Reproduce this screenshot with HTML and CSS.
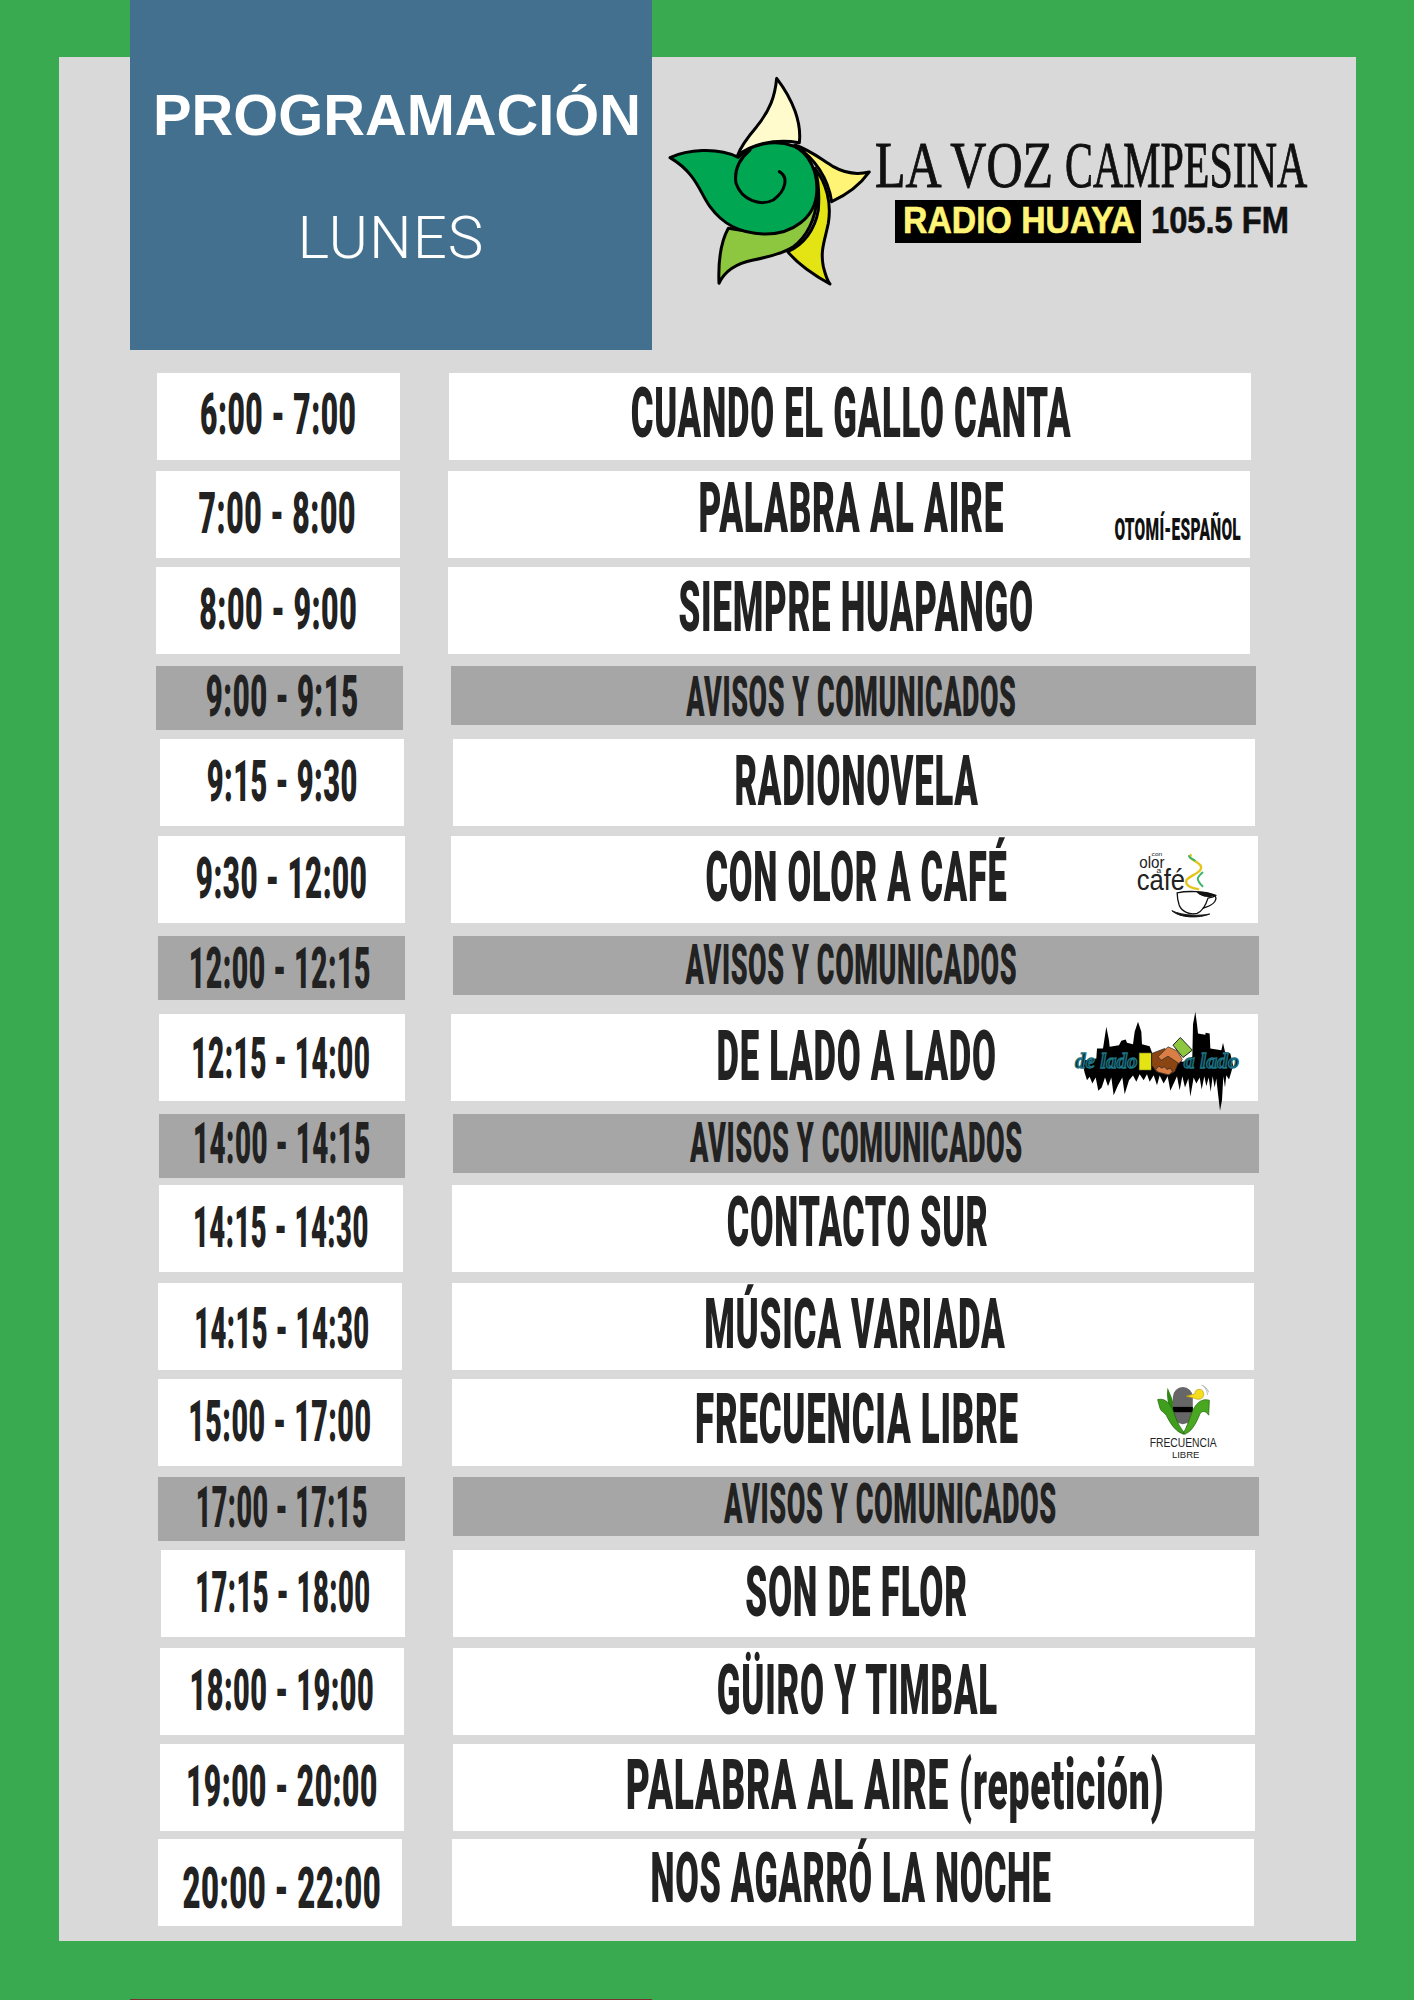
FILE: index.html
```html
<!DOCTYPE html>
<html lang="es">
<head>
<meta charset="utf-8">
<title>Programación Lunes - La Voz Campesina</title>
<link rel="stylesheet" href="styles.css">
</head>
<body>
<main class="board">
  <header class="head">
    <div class="banner">
      <h1 class="banner-title">PROGRAMACIÓN</h1>
      <p class="banner-day">LUNES</p>
    </div>
    <svg class="logo" viewBox="660 70 660 230" width="660" height="230" role="img" aria-label="La Voz Campesina">
      <g transform="translate(660 70) scale(0.3333)" stroke="#000" stroke-width="9" stroke-linejoin="round" stroke-linecap="round">
        <path fill="#fffbcc" d="M350 25C345 80 330 120 290 170C260 205 240 235 232 258C270 225 340 205 418 218C425 160 400 90 350 25Z"/>
        <path fill="#fff475" d="M405 225C450 240 480 265 520 290C555 310 590 315 628 306C600 345 560 375 515 395C505 330 470 270 405 225Z"/>
        <path fill="#e4e414" d="M465 295C500 340 515 400 505 460C495 510 480 540 490 590C495 610 500 630 510 642C470 620 420 590 383 545C430 525 465 480 475 420C478 380 478 340 465 295Z"/>
        <path fill="#8dc63f" d="M205 475C180 520 175 590 177 640C195 600 230 580 280 570C330 560 370 550 400 530C440 500 465 450 472 385L300 490Z"/>
        <path fill="#00a651" d="M30 263C80 240 170 230 235 262C270 225 340 205 400 228C450 250 475 310 470 370C465 440 400 495 310 492C240 490 190 465 150 410C120 370 110 310 30 263Z"/>
        <path fill="none" d="M358 305C385 320 380 360 340 390C300 410 245 390 228 340C222 300 240 265 270 240"/>
      </g>
      <g class="logo-name">
        <text transform="translate(875 187) scale(.768 1)">LA VOZ</text>
        <text transform="translate(1065 187) scale(.645 1)">CAMPESINA</text>
      </g>
      <rect x="895" y="200" width="246" height="43" fill="#000"/>
      <text class="logo-radio" x="903" y="233" textLength="232" lengthAdjust="spacingAndGlyphs">RADIO HUAYA</text>
      <text class="logo-fm" x="1151" y="233" textLength="138" lengthAdjust="spacingAndGlyphs">105.5 FM</text>
    </svg>
  </header>

  <section class="grid">
    <div class="row r1"><div class="time"><span class="txt">6:00 - 7:00</span></div><div class="show"><span class="txt">CUANDO EL GALLO CANTA</span></div></div>
    <div class="row r2"><div class="time"><span class="txt">7:00 - 8:00</span></div><div class="show"><span class="txt">PALABRA AL AIRE</span><span class="lang">OTOMÍ-ESPAÑOL</span></div></div>
    <div class="row r3"><div class="time"><span class="txt">8:00 - 9:00</span></div><div class="show"><span class="txt">SIEMPRE HUAPANGO</span></div></div>
    <div class="row notice r4"><div class="time"><span class="txt">9:00 - 9:15</span></div><div class="show"><span class="txt">AVISOS Y COMUNICADOS</span></div></div>
    <div class="row r5"><div class="time"><span class="txt">9:15 - 9:30</span></div><div class="show"><span class="txt">RADIONOVELA</span></div></div>
    <div class="row r6"><div class="time"><span class="txt">9:30 - 12:00</span></div><div class="show"><span class="txt">CON OLOR A CAFÉ</span>
      <svg class="badge badge-cafe" viewBox="280 1130 260 220" width="87" height="73" role="img" aria-label="Con olor a café">
        <g class="cafe-words">
          <text x="335" y="1156" font-size="18" textLength="32" lengthAdjust="spacingAndGlyphs">con</text>
          <text x="298" y="1192" font-size="50" textLength="76" lengthAdjust="spacingAndGlyphs">olor</text>
          <text x="350" y="1208" font-size="20" textLength="14" lengthAdjust="spacingAndGlyphs">a</text>
          <text x="290" y="1261" font-size="88" textLength="146" lengthAdjust="spacingAndGlyphs">café</text>
        </g>
        <path d="M455 1152C440 1165 470 1170 482 1185C495 1205 450 1215 440 1230C435 1245 450 1252 478 1258" fill="none" stroke="#e3c51b" stroke-width="7"/>
        <path d="M448 1155C445 1165 462 1165 466 1172M490 1205C470 1222 468 1228 490 1250" fill="none" stroke="#3cb56a" stroke-width="6"/>
        <path d="M412 1268C440 1262 500 1262 528 1276C522 1281 515 1282 505 1284C500 1300 490 1322 472 1330C450 1335 425 1325 418 1305C414 1292 412 1280 412 1268Z" fill="#fff" stroke="#111" stroke-width="4"/>
        <path d="M470 1266C490 1263 510 1268 526 1276C505 1285 485 1280 470 1266Z" fill="#111"/>
        <path d="M505 1278C522 1268 535 1280 525 1295C516 1308 500 1310 488 1316" fill="none" stroke="#111" stroke-width="4"/>
        <path d="M396 1322C420 1345 480 1345 510 1332C480 1338 430 1338 396 1322Z" fill="#111" stroke="#111" stroke-width="3"/>
      </svg>
    </div></div>
    <div class="row notice r7"><div class="time"><span class="txt">12:00 - 12:15</span></div><div class="show"><span class="txt">AVISOS Y COMUNICADOS</span></div></div>
    <div class="row r8"><div class="time"><span class="txt">12:15 - 14:00</span></div><div class="show"><span class="txt">DE LADO A LADO</span>
      <svg class="badge badge-lado" viewBox="100 30 510 305" width="170" height="102" role="img" aria-label="De lado a lado">
        <path fill="#000" d="M132 205L135 180L170 175L172 145L190 145L200 80L208 120L210 140L238 135L245 122L258 118L262 128L280 132L285 95L295 65L305 95L307 132L330 138L340 165L430 185L458 170L460 72L467 35L472 72L475 100L497 104L498 98L510 100L512 145L545 150L550 128L556 155L572 160L580 195L575 215L568 238L560 225L556 262L551 228L547 300L541 332L535 280L530 235L525 262L519 228L513 275L507 232L500 258L494 228L486 268L480 232L470 250L462 232L452 290L446 235L436 262L428 228L420 270L412 228L402 250L392 272L384 228L372 250L360 226L352 255L342 225L330 245L322 222L312 240L300 222L290 245L280 226L268 240L255 282L248 232L235 255L222 285L215 232L205 258L196 232L186 262L176 272L168 232L158 250L150 230L142 240L135 218Z"/>
        <g class="lado-words">
          <text x="106" y="205" font-size="66" textLength="188" lengthAdjust="spacingAndGlyphs">de lado</text>
          <text x="432" y="205" font-size="66" textLength="166" lengthAdjust="spacingAndGlyphs">a lado</text>
        </g>
        <rect x="298" y="158" width="37" height="52" fill="#e4e414" stroke="#222" stroke-width="2"/>
        <path d="M422 112L458 150L430 172L400 135Z" fill="#8dc63f" stroke="#222" stroke-width="3"/>
        <path d="M336 160L375 145L420 180L405 215L385 225L350 215L336 195Z" fill="#8b4513" stroke="#222" stroke-width="2"/>
        <path d="M355 170L385 140L412 152L428 178L418 190L385 168L365 180Z" fill="#d97f45" stroke="#222" stroke-width="2"/>
        <path d="M348 208L358 198L366 204L374 200L382 208L392 204L398 214L388 224L372 220L356 216Z" fill="#d97f45" stroke="#222" stroke-width="2"/>
      </svg>
    </div></div>
    <div class="row notice r9"><div class="time"><span class="txt">14:00 - 14:15</span></div><div class="show"><span class="txt">AVISOS Y COMUNICADOS</span></div></div>
    <div class="row r10"><div class="time"><span class="txt">14:15 - 14:30</span></div><div class="show"><span class="txt">CONTACTO SUR</span></div></div>
    <div class="row r11"><div class="time"><span class="txt">14:15 - 14:30</span></div><div class="show"><span class="txt">MÚSICA VARIADA</span></div></div>
    <div class="row r12"><div class="time"><span class="txt">15:00 - 17:00</span></div><div class="show"><span class="txt">FRECUENCIA LIBRE</span>
      <svg class="badge badge-libre" viewBox="80 65 220 235" width="73" height="78" role="img" aria-label="Frecuencia Libre">
        <path d="M142 82C150 100 160 120 165 150L150 150C142 125 138 105 142 82Z" fill="#2f8a14"/>
        <rect x="158" y="80" width="60" height="112" rx="30" fill="#666"/>
        <rect x="158" y="140" width="60" height="16" fill="#000"/>
        <path d="M112 118C135 112 152 130 162 160C172 190 182 205 196 222C170 222 150 190 138 165C125 150 122 155 118 140Z" fill="#3f9f1c" stroke="#1c5c0a" stroke-width="2"/>
        <path d="M268 120C245 112 225 130 214 160C205 185 198 205 188 222C212 222 228 190 240 160C252 145 262 160 266 165Z" fill="#4aa820" stroke="#1c5c0a" stroke-width="2"/>
        <path d="M198 108L225 100C222 88 240 82 248 92C255 102 250 118 234 117C224 116 220 112 198 108Z" fill="#f5dc1e" stroke="#b8a010" stroke-width="2"/>
        <path d="M250 78C258 84 262 92 262 104M244 74C254 78 262 84 266 96" fill="none" stroke="#999" stroke-width="2"/>
        <g class="libre-words">
          <text x="88" y="260" font-size="38" textLength="202" lengthAdjust="spacingAndGlyphs">FRECUENCIA</text>
          <text x="155" y="294" font-size="30" textLength="83" lengthAdjust="spacingAndGlyphs">LIBRE</text>
        </g>
      </svg>
    </div></div>
    <div class="row notice r13"><div class="time"><span class="txt">17:00 - 17:15</span></div><div class="show"><span class="txt">AVISOS Y COMUNICADOS</span></div></div>
    <div class="row r14"><div class="time"><span class="txt">17:15 - 18:00</span></div><div class="show"><span class="txt">SON DE FLOR</span></div></div>
    <div class="row r15"><div class="time"><span class="txt">18:00 - 19:00</span></div><div class="show"><span class="txt">GÜIRO Y TIMBAL</span></div></div>
    <div class="row r16"><div class="time"><span class="txt">19:00 - 20:00</span></div><div class="show"><span class="txt">PALABRA AL AIRE (repetición)</span></div></div>
    <div class="row r17"><div class="time"><span class="txt">20:00 - 22:00</span></div><div class="show"><span class="txt">NOS AGARRÓ LA NOCHE</span></div></div>
  </section>
</main>
<div class="edge"></div>
</body>
</html>
```

FILE: styles.css
```css
html, body { margin: 0; padding: 0; }
body { width: 1414px; height: 2000px; background: #39aa4f; overflow: hidden; }

.board {
  display: flex;
  flex-direction: column;
  margin: 57px 58px 0 59px;
  height: 1884px;
  background: #d9d9d9;
}
.head { display: flex; margin-top: -57px; margin-left: 71px; height: 350px; flex: none; }
.banner { width: 522px; height: 350px; flex: none; background: #43708f; color: #fff; padding-top: 87px; box-sizing: border-box; }
.banner-title {
  margin: 0 0 0 23px;
  font: 700 57.8px/1 "Liberation Sans", Arial, sans-serif;
  white-space: nowrap;
}
.banner-day {
  margin: 63px 0 0;
  font: 300 60px/1 Roboto, "Liberation Sans", sans-serif;
  letter-spacing: 1px;
  text-align: center;
}
.logo { display: block; margin: 70px 0 0 8px; flex: none; overflow: visible; }
.logo-name text { font: 400 65px "Liberation Serif", serif; fill: #111; stroke: #111; stroke-width: 1px; }
.logo-radio { font: 700 36px "Liberation Sans", sans-serif; fill: #fff475; stroke: #fff475; stroke-width: .6px; }
.logo-fm { font: 700 36px "Liberation Sans", sans-serif; fill: #111; stroke: #111; stroke-width: .6px; }

.grid { display: flex; flex-direction: column; }
.row {
  display: flex;
  align-items: flex-start;
  flex: none;
  margin-top: var(--mt);
  margin-left: var(--x);
}
.time, .show {
  display: flex;
  align-items: center;
  justify-content: center;
  background: #fff;
  height: 87px;
  flex: none;
}
.time { width: var(--tw); }
.show { width: var(--mw); margin-left: var(--gap); position: relative; }
.notice .time { height: 64px; background: #a6a6a6; }
.notice .show { height: 59px; background: #a6a6a6; }

.txt {
  display: inline-block;
  flex: none;
  white-space: nowrap;
  color: #222;
  font-family: Roboto, "Liberation Sans", sans-serif;
  font-weight: 900;
  line-height: 1;
}
.time .txt {
  font-size: 58px;
  letter-spacing: 1px;
  transform: translate(var(--tdx, 0px), var(--tdy, 0px)) scaleX(var(--tsx, .5));
}
.show .txt {
  font-size: 70px;
  letter-spacing: 1.5px;
  transform: translate(var(--mdx, 0px), var(--mdy, 0px)) scaleX(var(--msx, .5));
}
.notice .show .txt { font-size: 55px; letter-spacing: 1.2px; }

.lang {
  position: absolute;
  right: 9px;
  bottom: 13px;
  font: 900 31px/1 Roboto, sans-serif;
  letter-spacing: .5px;
  color: #111;
  white-space: nowrap;
  transform: scaleX(.5);
  transform-origin: right center;
}
.badge { position: absolute; display: block; overflow: visible; }
.badge-cafe { left: 682px; top: 11px; }
.badge-lado { left: 622px; top: -4px; }
.badge-libre { left: 695px; top: 3px; }
.cafe-words text { font-family: "Liberation Sans", sans-serif; fill: #222; }
.lado-words text { font-family: "Liberation Serif", serif; font-style: italic; font-weight: 700; fill: #0b2930; stroke: #1d7383; stroke-width: 4px; }
.libre-words text { font-family: "Liberation Sans", sans-serif; fill: #222; }

.edge { width: 522px; height: 1px; margin: 58px 0 0 130px; background: #7d2e2e; }

.r1  { --mt: 23px; --x: 98px;  --tw: 243px; --gap: 49px; --mw: 802px; --tdy: -3px; --tsx: .517; --mdx: 1px; --mdy: -4px; --msx: .495; }
.r2  { --mt: 11px; --x: 97px;  --tw: 244px; --gap: 48px; --mw: 802px; --tdx: -1px; --tdy: -2px; --tsx: .52; --mdx: 2px; --mdy: -7px; --msx: .502; }
.r3  { --mt: 9px;  --x: 97px;  --tw: 244px; --gap: 48px; --mw: 802px; --tdy: -2px; --tsx: .522; --mdx: 7px; --mdy: -4px; --msx: .499; }
.r4  { --mt: 12px; --x: 97px;  --tw: 247px; --gap: 48px; --mw: 805px; --tdx: 3px; --tdy: -2px; --tsx: .505; --mdx: -2px; --mdy: 2px; --msx: .488; }
.r5  { --mt: 9px;  --x: 101px; --tw: 244px; --gap: 49px; --mw: 802px; --tdy: -2px; --tsx: .5; --mdx: 3px; --mdy: -2px; --msx: .495; }
.r6  { --mt: 10px; --x: 99px;  --tw: 247px; --gap: 46px; --mw: 807px; --tdy: -2px; --tsx: .509; --mdx: 2px; --mdy: -3px; --msx: .491; }
.r7  { --mt: 13px; --x: 99px;  --tw: 247px; --gap: 48px; --mw: 806px; --tdx: -2px; --tsx: .49; --mdx: -5px; --msx: .49; }
.r8  { --mt: 14px; --x: 100px; --tw: 246px; --gap: 46px; --mw: 807px; --tdx: -1px; --tsx: .482; --mdx: 2px; --mdy: -2px; --msx: .496; }
.r9  { --mt: 13px; --x: 100px; --tw: 246px; --gap: 48px; --mw: 806px; --tdy: -3px; --tsx: .478; --msx: .492; }
.r10 { --mt: 7px;  --x: 100px; --tw: 244px; --gap: 49px; --mw: 802px; --tdy: -2px; --tsx: .473; --mdx: 5px; --mdy: -7px; --msx: .487; }
.r11 { --mt: 11px; --x: 99px;  --tw: 244px; --gap: 50px; --mw: 802px; --tdx: 2px; --tdy: 1px; --tsx: .472; --mdx: 2px; --mdy: -3px; --msx: .499; }
.r12 { --mt: 9px;  --x: 99px;  --tw: 244px; --gap: 50px; --mw: 802px; --tdy: -2px; --tsx: .493; --mdx: 4px; --mdy: -4px; --msx: .498; }
.r13 { --mt: 11px; --x: 99px;  --tw: 247px; --gap: 48px; --mw: 806px; --tdy: -2px; --tsx: .463; --mdx: 34px; --mdy: -2px; --msx: .492; }
.r14 { --mt: 9px;  --x: 102px; --tw: 244px; --gap: 48px; --mw: 802px; --tdy: -2px; --tsx: .472; --mdx: 3px; --mdy: -2px; --msx: .5; }
.r15 { --mt: 11px; --x: 101px; --tw: 244px; --gap: 49px; --mw: 802px; --tdy: -2px; --tsx: .497; --mdx: 3px; --mdy: -2px; --msx: .498; }
.r16 { --mt: 9px;  --x: 101px; --tw: 244px; --gap: 49px; --mw: 802px; --tdy: -2px; --tsx: .516; --mdx: 41px; --mdy: -3px; --msx: .531; }
.r17 { --mt: 8px;  --x: 99px;  --tw: 244px; --gap: 50px; --mw: 802px; --tdx: 2px; --tdy: 5px; --tsx: .535; --mdx: -2px; --mdy: -5px; --msx: .488; }
```
